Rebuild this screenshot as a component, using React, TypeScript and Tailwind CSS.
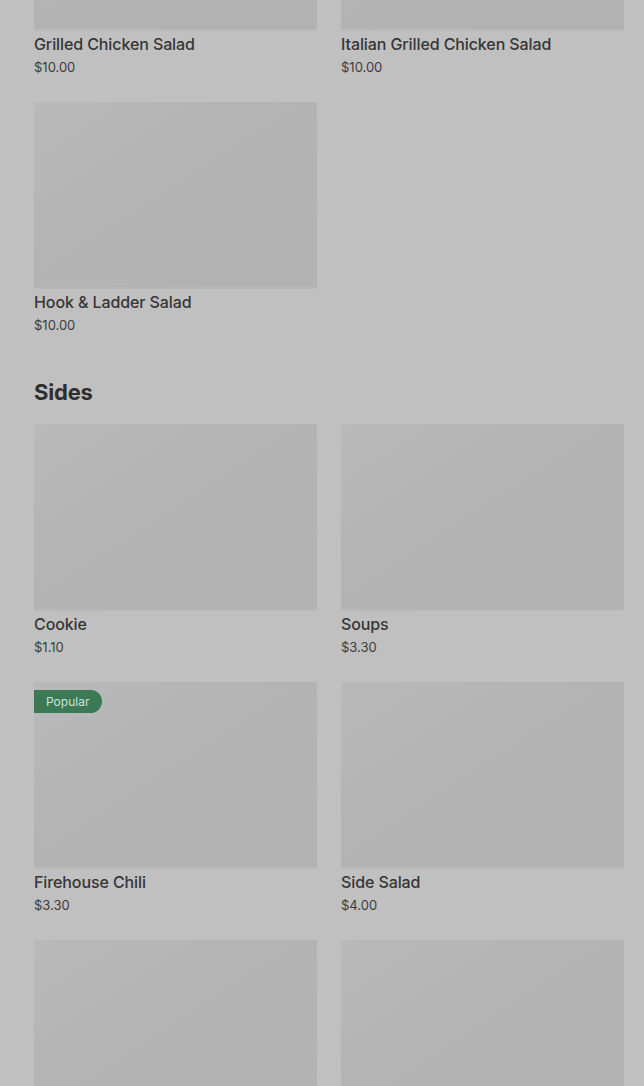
import React from "react";

type Item = { name?: string; price?: string; popular?: boolean };

function Card({ item }: { item: Item }) {
  return (
    <div className="flex flex-col">
      <div className="relative h-[187px] w-full rounded-[2px] bg-[#b3b3b3] bg-gradient-to-br from-[#b9b9b9] via-[#b3b3b3] to-[#b2b2b2] border-b-[2px] border-[#b8b8b8]">
        {item.popular && (
          <div className="absolute left-0 top-[8px] flex h-[23px] w-[68px] items-center rounded-r-full bg-[#3b7a55] pl-[12px] text-[12px] leading-none text-[#cfe2d5]">
            Popular
          </div>
        )}
      </div>
      {item.name && (
        <div className="mt-[3px] text-[16px] leading-[20px] font-medium tracking-[-0.1px] text-[#363636]">{item.name}</div>
      )}
      {item.price && (
        <div className="mt-[3px] text-[13px] leading-[20px] text-[#3c3c3c]">{item.price}</div>
      )}
    </div>
  );
}

export default function App() {
  const salads: Item[] = [
    { name: "Grilled Chicken Salad", price: "$10.00" },
    { name: "Italian Grilled Chicken Salad", price: "$10.00" },
    { name: "Hook & Ladder Salad", price: "$10.00" },
  ];
  const sides: Item[] = [
    { name: "Cookie", price: "$1.10" },
    { name: "Soups", price: "$3.30" },
    { name: "Firehouse Chili", price: "$3.30", popular: true },
    { name: "Side Salad", price: "$4.00" },
    {},
    {},
  ];
  return (
    <div
      className="h-[1086px] w-[644px] overflow-hidden bg-[#c0c0c0]"
      style={{ fontFamily: "Inter, 'Noto Sans', sans-serif" }}
    >
      <div className="-mt-[156px] pl-[34px] pr-[20px]">
        <div className="grid grid-cols-2 gap-x-[24px] gap-y-[25px]">
          {salads.map((s, i) => (
            <Card key={i} item={s} />
          ))}
        </div>
        <h2 className="mt-[41px] mb-[16px] text-[22px] leading-[32px] font-bold tracking-[-0.2px] text-[#2f2f2f]">Sides</h2>
        <div className="grid grid-cols-2 gap-x-[24px] gap-y-[25px]">
          {sides.map((s, i) => (
            <Card key={i} item={s} />
          ))}
        </div>
      </div>
    </div>
  );
}
